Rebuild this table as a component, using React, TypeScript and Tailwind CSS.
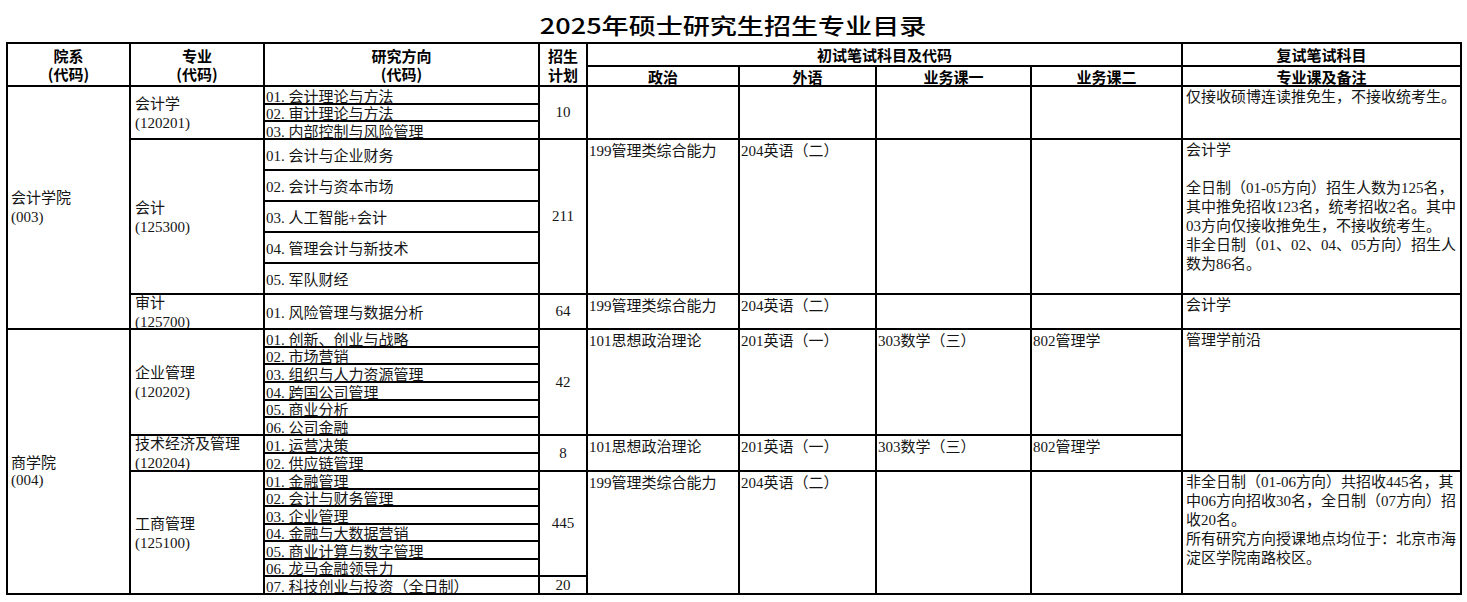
import React from 'react';

const body = "font-['Liberation_Serif','Noto_Sans_CJK_SC',serif] text-[15px] text-[#151515]";
const head = "font-['Noto_Sans_CJK_SC',sans-serif] font-bold text-[15px] text-black";

type CellProps = { className: string; children?: React.ReactNode };

// every cell draws its own right + bottom rule, the grid draws left + top
const Cell: React.FC<CellProps> = ({ className, children }) => (
  <div className={`border-r-2 border-b-2 border-black overflow-hidden ${className}`}>{children}</div>
);

const directions = [
  { cls: 'row-start-3', t: '01. 会计理论与方法' },
  { cls: 'row-start-4', t: '02. 审计理论与方法' },
  { cls: 'row-start-5', t: '03. 内部控制与风险管理' },
  { cls: 'row-start-6', t: '01. 会计与企业财务' },
  { cls: 'row-start-7', t: '02. 会计与资本市场' },
  { cls: 'row-start-8', t: '03. 人工智能+会计' },
  { cls: 'row-start-9', t: '04. 管理会计与新技术' },
  { cls: 'row-start-10', t: '05. 军队财经' },
  { cls: 'row-start-11', t: '01. 风险管理与数据分析' },
  { cls: 'row-start-12', t: '01. 创新、创业与战略' },
  { cls: 'row-start-13', t: '02. 市场营销' },
  { cls: 'row-start-14', t: '03. 组织与人力资源管理' },
  { cls: 'row-start-15', t: '04. 跨国公司管理' },
  { cls: 'row-start-16', t: '05. 商业分析' },
  { cls: 'row-start-17', t: '06. 公司金融' },
  { cls: 'row-start-18', t: '01. 运营决策' },
  { cls: 'row-start-19', t: '02. 供应链管理' },
  { cls: 'row-start-20', t: '01. 金融管理' },
  { cls: 'row-start-21', t: '02. 会计与财务管理' },
  { cls: 'row-start-22', t: '03. 企业管理' },
  { cls: 'row-start-23', t: '04. 金融与大数据营销' },
  { cls: 'row-start-24', t: '05. 商业计算与数字管理' },
  { cls: 'row-start-25', t: '06. 龙马金融领导力' },
  { cls: 'row-start-26', t: '07. 科技创业与投资（全日制）' },
];

const majors = [
  { cls: 'row-start-3 row-span-3', name: '会计学', code: '(120201)' },
  { cls: 'row-start-6 row-span-5', name: '会计', code: '(125300)' },
  { cls: 'row-start-11 row-span-1', name: '审计', code: '(125700)' },
  { cls: 'row-start-12 row-span-6', name: '企业管理', code: '(120202)' },
  { cls: 'row-start-18 row-span-2', name: '技术经济及管理', code: '(120204)' },
  { cls: 'row-start-20 row-span-7', name: '工商管理', code: '(125100)' },
];

const plans = [
  { cls: 'row-start-3 row-span-3', n: '10' },
  { cls: 'row-start-6 row-span-5', n: '211' },
  { cls: 'row-start-11 row-span-1', n: '64' },
  { cls: 'row-start-12 row-span-6', n: '42' },
  { cls: 'row-start-18 row-span-2', n: '8' },
  { cls: 'row-start-20 row-span-6', n: '445' },
  { cls: 'row-start-26 row-span-1', n: '20' },
];

const mgmt = ['199管理类综合能力', '204英语（二）', '', ''];
const acad = ['101思想政治理论', '201英语（一）', '303数学（三）', '802管理学'];

const exams = [
  { cls: 'row-start-3 row-span-3', v: ['', '', '', ''] },
  { cls: 'row-start-6 row-span-5', v: mgmt },
  { cls: 'row-start-11 row-span-1', v: mgmt },
  { cls: 'row-start-12 row-span-6', v: acad },
  { cls: 'row-start-18 row-span-2', v: acad },
  { cls: 'row-start-20 row-span-7', v: mgmt },
];
const examCols = ['col-start-5', 'col-start-6', 'col-start-7', 'col-start-8'];

const notes = [
  { cls: 'row-start-3 row-span-3', lines: ['仅接收硕博连读推免生，不接收统考生。'] },
  {
    cls: 'row-start-6 row-span-5',
    lines: [
      '会计学',
      '\u00a0',
      '全日制（01-05方向）招生人数为125名，',
      '其中推免招收123名，统考招收2名。其中',
      '03方向仅接收推免生，不接收统考生。',
      '非全日制（01、02、04、05方向）招生人',
      '数为86名。',
    ],
  },
  { cls: 'row-start-11 row-span-1', lines: ['会计学'] },
  { cls: 'row-start-12 row-span-8', lines: ['管理学前沿'] },
  {
    cls: 'row-start-20 row-span-7',
    lines: [
      '非全日制（01-06方向）共招收445名，其',
      '中06方向招收30名，全日制（07方向）招',
      '收20名。',
      '所有研究方向授课地点均位于：北京市海',
      '淀区学院南路校区。',
    ],
  },
];

const App: React.FC = () => {
  return (
    <div className="w-[1467px] h-[602px] bg-white overflow-hidden">
      <div className="h-[42px] pt-[6px] flex items-center justify-center">
        <span className="inline-block scale-x-[1.23] font-['Noto_Sans_CJK_SC',sans-serif] font-medium text-[22px] leading-none text-black">
          2025年硕士研究生招生专业目录
        </span>
      </div>

      <div className="ml-[6px] w-[1456px] grid grid-cols-[123px_134px_275px_48px_152px_137px_155px_151px_279px] grid-rows-[23px_20px_18px_17px_18px_31px_31px_31px_31px_31px_35px_18px_17px_18px_18px_17px_18px_18px_18px_18px_17px_18px_17px_18px_17px_18px] border-l-2 border-t-2 border-black">
        {/* header */}
        <Cell className={`col-start-1 row-start-1 row-span-2 flex flex-col items-center justify-center leading-[18px] ${head}`}>
          <span>院系</span>
          <span>(代码)</span>
        </Cell>
        <Cell className={`col-start-2 row-start-1 row-span-2 flex flex-col items-center justify-center leading-[18px] ${head}`}>
          <span>专业</span>
          <span>(代码)</span>
        </Cell>
        <Cell className={`col-start-3 row-start-1 row-span-2 flex flex-col items-center justify-center leading-[18px] ${head}`}>
          <span>研究方向</span>
          <span>(代码)</span>
        </Cell>
        <Cell className={`col-start-4 row-start-1 row-span-2 flex flex-col items-center justify-center leading-[19px] ${head}`}>
          <span>招生</span>
          <span>计划</span>
        </Cell>
        <Cell className={`col-start-5 col-span-4 row-start-1 flex items-center justify-center leading-none ${head}`}>
          初试笔试科目及代码
        </Cell>
        <Cell className={`col-start-9 row-start-1 flex items-center justify-center leading-none ${head}`}>复试笔试科目</Cell>
        <Cell className={`col-start-5 row-start-2 flex items-center justify-center leading-none ${head}`}>政治</Cell>
        <Cell className={`col-start-6 row-start-2 flex items-center justify-center leading-none ${head}`}>外语</Cell>
        <Cell className={`col-start-7 row-start-2 flex items-center justify-center leading-none ${head}`}>业务课一</Cell>
        <Cell className={`col-start-8 row-start-2 flex items-center justify-center leading-none ${head}`}>业务课二</Cell>
        <Cell className={`col-start-9 row-start-2 flex items-center justify-center leading-none ${head}`}>专业课及备注</Cell>

        {/* schools */}
        <Cell className={`col-start-1 row-start-3 row-span-9 flex flex-col justify-center pl-[3px] leading-[19px] ${body}`}>
          <span>会计学院</span>
          <span>(003)</span>
        </Cell>
        <Cell className={`col-start-1 row-start-12 row-span-15 flex flex-col justify-center pl-[3px] pt-[21px] leading-[17px] ${body}`}>
          <span>商学院</span>
          <span>(004)</span>
        </Cell>

        {majors.map((m) => (
          <Cell key={m.code} className={`col-start-2 ${m.cls} flex flex-col justify-center pl-[4px] pt-[2px] leading-[19px] ${body}`}>
            <span className="whitespace-nowrap">{m.name}</span>
            <span className="whitespace-nowrap">{m.code}</span>
          </Cell>
        ))}

        {directions.map((d) => (
          <Cell key={d.cls} className={`col-start-3 ${d.cls} flex items-center pl-[1px] pt-[3px] leading-[16px] whitespace-nowrap ${body}`}>
            {d.t}
          </Cell>
        ))}

        {plans.map((p) => (
          <Cell key={p.cls} className={`col-start-4 ${p.cls} flex items-center justify-center leading-none ${body}`}>
            {p.n}
          </Cell>
        ))}

        {exams.map((e) =>
          e.v.map((txt, i) => (
            <Cell key={e.cls + i} className={`${examCols[i]} ${e.cls} pl-[1px] pt-[2px] leading-[19px] whitespace-nowrap ${body}`}>
              {txt}
            </Cell>
          ))
        )}

        {notes.map((n) => (
          <Cell key={n.cls} className={`col-start-9 ${n.cls} flex flex-col pl-[3px] pt-[1px] leading-[19px] whitespace-nowrap ${body}`}>
            {n.lines.map((l, i) => (
              <span key={i}>{l}</span>
            ))}
          </Cell>
        ))}
      </div>
    </div>
  );
};

export default App;
